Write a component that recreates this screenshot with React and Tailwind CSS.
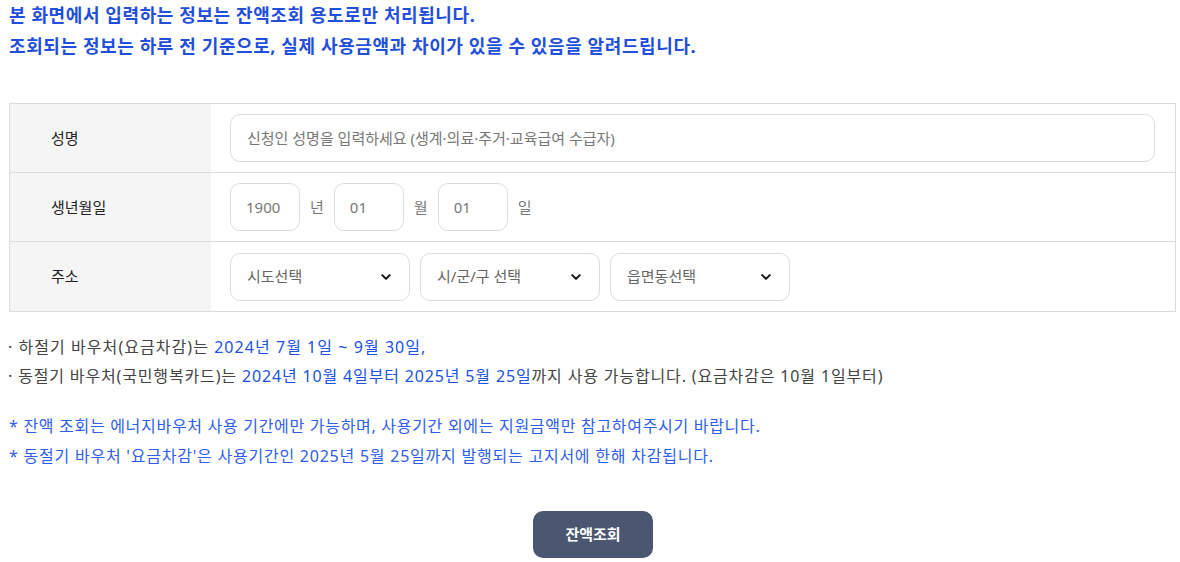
import React from "react";

const font = { fontFamily: '"Noto Sans", "Noto Sans CJK KR", sans-serif' };

function Chevron() {
  return (
    <svg width="12" height="12" viewBox="0 0 16 16" className="shrink-0">
      <path d="M3 5.5 L8 10.5 L13 5.5" fill="none" stroke="#111" strokeWidth="2.6" strokeLinecap="round" strokeLinejoin="round" />
    </svg>
  );
}

function Select({ label }) {
  return (
    <div className="w-[180px] h-[48px] rounded-[10px] border border-[#dcdcdc] bg-white flex items-center justify-between pl-[16px] pr-[17px]">
      <span className="text-[15px] text-[#666]">{label}</span>
      <Chevron />
    </div>
  );
}

function SmallInput({ value }) {
  return (
    <div className="w-[70px] h-[48px] rounded-[10px] border border-[#dcdcdc] bg-white flex items-center pl-[15px]">
      <span className="text-[15px] text-[#777]">{value}</span>
    </div>
  );
}

function Row({ label, children, last }) {
  return (
    <div className={"flex h-[69px] " + (last ? "" : "border-b border-[#dcdcdc]")}>
      <div className="w-[201px] bg-[#f5f5f5] flex items-center pl-[41px] text-[15px] text-[#222] font-normal">
        {label}
      </div>
      <div className="flex-1 flex items-center pl-[19px] pr-[20px] gap-[10px]">{children}</div>
    </div>
  );
}

const B = ({ children }) => <span className="text-[#2052e6]">{children}</span>;

export default function App() {
  return (
    <div className="w-[1180px] h-[562px] bg-white overflow-hidden" style={font}>
      <div className="pl-[9px] text-[18px] font-bold text-[#1f4fdc] leading-[31px] tracking-[0.6px]">
        <p>본 화면에서 입력하는 정보는 잔액조회 용도로만 처리됩니다.</p>
        <p>조회되는 정보는 하루 전 기준으로, 실제 사용금액과 차이가 있을 수 있음을 알려드립니다.</p>
      </div>

      <div className="ml-[9px] mr-[4px] mt-[41px] border border-[#dcdcdc]">
        <Row label="성명">
          <div className="flex-1 h-[48px] rounded-[10px] border border-[#dcdcdc] flex items-center pl-[16px]">
            <span className="text-[15px] text-[#777]">신청인 성명을 입력하세요 (생계·의료·주거·교육급여 수급자)</span>
          </div>
        </Row>
        <Row label="생년월일">
          <SmallInput value="1900" />
          <span className="text-[15px] text-[#777]">년</span>
          <SmallInput value="01" />
          <span className="text-[15px] text-[#777]">월</span>
          <SmallInput value="01" />
          <span className="text-[15px] text-[#777]">일</span>
        </Row>
        <Row label="주소" last>
          <Select label="시도선택" />
          <Select label="시/군/구 선택" />
          <Select label="읍면동선택" />
        </Row>
      </div>

      <div className="pl-[8px] mt-[21px] text-[16px] text-[#444] leading-[29px]">
        <p className="tracking-[1.05px]">· 하절기 바우처(요금차감)는 <B>2024년 7월 1일 ~ 9월 30일,</B></p>
        <p className="tracking-[0.85px]">· 동절기 바우처(국민행복카드)는 <B>2024년 10월 4일부터 2025년 5월 25일</B>까지 사용 가능합니다. (요금차감은 10월 1일부터)</p>
      </div>

      <div className="pl-[9px] mt-[20px] text-[16px] text-[#2e5ef0] leading-[30px]">
        <p className="tracking-[0.7px]">* 잔액 조회는 에너지바우처 사용 기간에만 가능하며, 사용기간 외에는 지원금액만 참고하여주시기 바랍니다.</p>
        <p className="tracking-[0.77px]">* 동절기 바우처 '요금차감'은 사용기간인 2025년 5월 25일까지 발행되는 고지서에 한해 차감됩니다.</p>
      </div>

      <div className="flex justify-center mt-[40px] pl-[6px]">
        <button className="w-[120px] h-[47px] rounded-[10px] bg-[#4b5671] text-white text-[15px] font-bold">잔액조회</button>
      </div>
    </div>
  );
}
